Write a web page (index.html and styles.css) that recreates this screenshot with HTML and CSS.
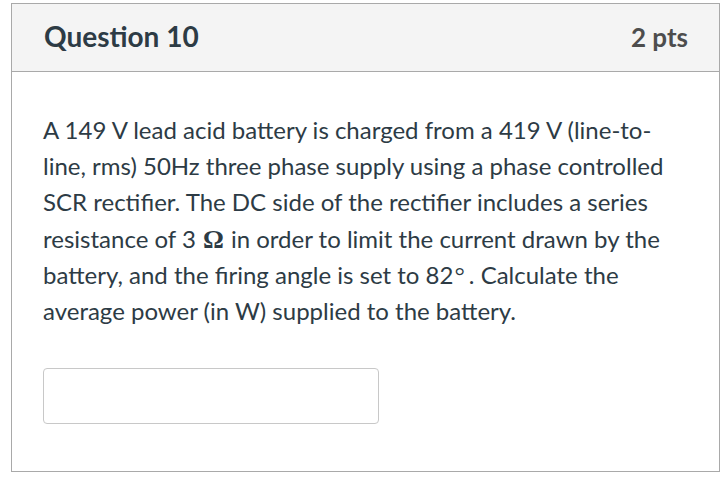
FILE: index.html
```html
<!DOCTYPE html>
<html>
<head>
<meta charset="utf-8">
<link rel="stylesheet" href="styles.css">
</head>
<body>
<div class="card">
  <div class="header">
    <h2 class="title">Question 10</h2>
    <div class="pts">2 pts</div>
  </div>
  <div class="body">
    <p class="text">A 149 V lead acid battery is charged from a 419 V (line-to-line, rms) 50Hz three phase supply using a phase controlled SCR rectifier. The DC side of the rectifier includes a series resistance of 3 <span class="math omega">Ω</span> in order to limit the current drawn by the battery, and the firing angle is set to 82<span class="math deg">°</span>. Calculate the average power (in W) supplied to the battery.</p>
    <div class="answer"></div>
  </div>
</div>
</body>
</html>
```
FILE: styles.css
```css
html, body {
  margin: 0;
  padding: 0;
  background: #fff;
}
body {
  padding: 3px 0 0 11px;
  font-family: Lato, "Noto Sans", sans-serif;
}
.card {
  width: 707px;
  height: 467px;
  border: 1px solid #a9a9a9;
  box-sizing: content-box;
}
.header {
  height: 67px;
  background: #f4f4f4;
  border-bottom: 1px solid #a9a9a9;
  display: flex;
  align-items: center;
  justify-content: space-between;
  padding: 0 31px 0 32px;
}
.title {
  margin: 0 0 4px 0;
  font-size: 28px;
  font-weight: 700;
  color: #2d3b45;
}
.pts {
  font-size: 26px;
  font-weight: 700;
  color: #4d4d4d;
  margin-bottom: 2px;
}
.body {
  padding: 40px 31px 0 31px;
}
.text {
  margin: 0;
  font-size: 24px;
  line-height: 36.2px;
  color: #2d3b45;
  width: 645px;
}
.math {
  font-family: "Liberation Serif", "DejaVu Serif", serif;
  line-height: 1;
}
.omega {
  font-size: 26px;
  font-weight: 700;
  margin: 0 1px;
}
.deg {
  font-size: 26px;
  margin: 0 4px 0 1px;
}
.answer {
  margin-top: 39px;
  width: 334px;
  height: 54px;
  border: 1px solid #c8c8c8;
  border-radius: 4px;
}
```
